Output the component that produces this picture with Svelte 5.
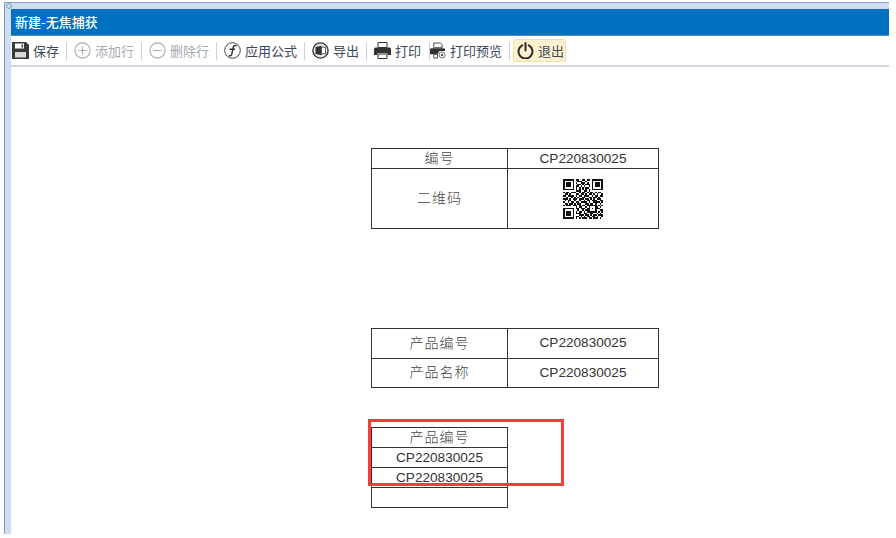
<script lang="ts">
  const code = "CP220830025";

  const qrRows = [
    "1111111011001101101111111",
    "1000001001110010001000001",
    "1011101010011101001011101",
    "1011101001101011101011101",
    "1011101011010100101011101",
    "1000001010101011001000001",
    "1111111010101010101111111",
    "0000000011100110100000000",
    "1011011100101101011010110",
    "0110100011011010110101001",
    "1101111010110111001011011",
    "0010010101001100110110100",
    "1110101110111011010101110",
    "0101100100100101101110011",
    "1001011011011110100111101",
    "0110110101100011011010010",
    "1011101110101101111110101",
    "0000000010110010100011010",
    "1111111011011101101011100",
    "1000001001001011100010011",
    "1011101010110101111110101",
    "1011101011100110011001010",
    "1011101000111011010110111",
    "1000001011010101101101001",
    "1111111010101110110111010",
  ];

  const qrPath = qrRows
    .map((row, y) =>
      row
        .split("")
        .map((c, x) => (c === "1" ? `M${x} ${y}h1v1h-1z` : ""))
        .join(""),
    )
    .join("");
</script>

<div class="window">
  <div class="frame-top"><span class="frame-dot"></span></div>
  <div class="frame-body">
    <div class="frame-left"></div>
    <div class="main">
      <div class="titlebar">新建-无焦捕获</div>

      <div class="toolbar">
        <button class="tool" type="button">
          <svg viewBox="0 0 17 17" width="17" height="17">
            <path d="M0 0h14l3 3v14H0z" fill="#3a3a3a" />
            <path d="M3 1.500h9v5H3z" fill="#fff" />
            <path d="M9.500 2.500h1.600v3H9.500z" fill="#3a3a3a" />
            <path d="M3 10h11v5.500H3z" fill="#d8d8d8" />
          </svg>
          保存
        </button>
        <span class="sep"></span>
        <button class="tool disabled" type="button">
          <svg viewBox="0 0 17 17" width="17" height="17" fill="none" stroke="#a8a8a8" stroke-width="1.100">
            <circle cx="8.500" cy="8.500" r="7.600" />
            <path d="M8.500 4.500v8M4.500 8.500h8" />
          </svg>
          添加行
        </button>
        <span class="sep"></span>
        <button class="tool disabled" type="button">
          <svg viewBox="0 0 17 17" width="17" height="17" fill="none" stroke="#a8a8a8" stroke-width="1.100">
            <circle cx="8.500" cy="8.500" r="7.600" />
            <path d="M4.500 8.500h8" />
          </svg>
          删除行
        </button>
        <span class="sep"></span>
        <button class="tool" type="button">
          <svg viewBox="0 0 17 17" width="17" height="17" fill="none" stroke="#333">
            <circle cx="8.500" cy="8.500" r="7.800" stroke-width="0.900" />
            <path d="M12.600 3.800c-1.800-.9-3 0-3.500 2L7.900 11.600c-.4 2-1.500 2.600-3 2M5.600 7.200h5.400" stroke-width="1.500" />
          </svg>
          应用公式
        </button>
        <span class="sep"></span>
        <button class="tool" type="button">
          <svg viewBox="0 0 17 17" width="17" height="17">
            <circle cx="8.500" cy="8.500" r="7.600" fill="#e8e8e8" stroke="#333" stroke-width="1.400" />
            <path d="M3.500 5l6-1.200v9.400l-6-1.200z" fill="#333" />
            <path d="M9.500 5.200h4v6.600h-4z" fill="#fff" stroke="#333" stroke-width="0.800" />
          </svg>
          导出
        </button>
        <span class="sep"></span>
        <button class="tool" type="button">
          <svg viewBox="0 0 17 17" width="17" height="17">
            <path d="M4 .5h9v5H4z" fill="#fff" stroke="#333" />
            <path d="M1.500 5.500h14a1.500 1.500 0 0 1 1.500 1.500v6h-3.500v-2h-10v2H0V7a1.500 1.500 0 0 1 1.500-1.500z" fill="#333" />
            <path d="M4 12h9v4.500H4z" fill="#fff" stroke="#333" />
          </svg>
          打印
        </button>
        <span class="sep tight"></span>
        <button class="tool" type="button">
          <svg viewBox="0 0 17 17" width="16" height="17">
            <path d="M4 .5h7l2 2v3H4z" fill="#fff" stroke="#444" />
            <path d="M1.500 6h13a1.500 1.500 0 0 1 1.500 1.500V9H10l-2 3.500H0V7.500A1.500 1.500 0 0 1 1.500 6z" fill="#333" />
            <path d="M4 12.500h4v4H4z" fill="#fff" stroke="#444" />
            <circle cx="12.800" cy="13.200" r="3.200" fill="#fff" stroke="#666" />
            <circle cx="12.800" cy="13.200" r="1.300" fill="#555" />
          </svg>
          打印预览
        </button>
        <span class="sep before-active"></span>
        <button class="tool active" type="button">
          <svg viewBox="0 0 17 17" width="17" height="17" fill="none" stroke="#2b2b2b" stroke-width="2" stroke-linecap="round">
            <path d="M5.200 3.300a7 7 0 1 0 6.600 0" />
            <path d="M8.500 1v7.500" />
          </svg>
          退出
        </button>
      </div>

      <div class="sheet">
        <table class="wide first">
          <colgroup><col class="col-a" /><col /></colgroup>
          <tbody>
            <tr class="row-20">
              <td class="label">编号</td>
              <td class="code">{code}</td>
            </tr>
            <tr class="row-60">
              <td class="label">二维码</td>
              <td class="qr-cell">
                <svg class="qr" viewBox="0 0 25 25" width="40" height="40" shape-rendering="crispEdges">
                  <path d={qrPath} fill="#111" />
                </svg>
              </td>
            </tr>
          </tbody>
        </table>

        <table class="wide second">
          <colgroup><col class="col-a" /><col /></colgroup>
          <tbody>
            <tr class="row-29">
              <td class="label">产品编号</td>
              <td class="code">{code}</td>
            </tr>
            <tr class="row-29">
              <td class="label">产品名称</td>
              <td class="code">{code}</td>
            </tr>
          </tbody>
        </table>

        <table class="narrow-table">
          <tbody>
            <tr class="row-20"><td class="label">产品编号</td></tr>
            <tr class="row-20"><td class="code">{code}</td></tr>
            <tr class="row-20"><td class="code">{code}</td></tr>
            <tr class="row-20"><td></td></tr>
          </tbody>
        </table>

        <div class="highlight"></div>
      </div>
    </div>
  </div>
</div>

<style>
  :global(body) {
    margin: 0;
    background: #fff;
  }

  .window {
    box-sizing: border-box;
    width: 885px;
    height: 532px;
    margin: 2px 0 0 4px;
    border-left: 1px solid #7f9bcc;
    border-top: 1px solid #8ba3cf;
    display: flex;
    flex-direction: column;
    font-family: "Noto Sans CJK SC", sans-serif;
  }

  .frame-top {
    flex: none;
    height: 6px;
    background: #d0ddef;
    position: relative;
  }

  .frame-dot {
    position: absolute;
    left: 1px;
    top: 0;
    width: 4px;
    height: 4px;
    border: 1px solid #8a9ab5;
    border-radius: 50%;
  }

  .frame-body {
    flex: 1;
    display: flex;
    min-height: 0;
  }

  .frame-left {
    flex: none;
    width: 6px;
    background: #d0ddef;
  }

  .main {
    flex: 1;
    min-width: 0;
    display: flex;
    flex-direction: column;
    background: #fff;
  }

  .titlebar {
    flex: none;
    box-sizing: border-box;
    height: 27px;
    padding: 0 0 1px 4px;
    background: #0070c0;
    border-bottom: 1px solid #5f8aa8;
    color: #fff;
    font-size: 13px;
    font-weight: 500;
    line-height: 26px;
  }

  .toolbar {
    flex: none;
    box-sizing: border-box;
    height: 31px;
    padding: 0 0 0 1px;
    display: flex;
    align-items: center;
    border-bottom: 2px solid #d6d6e0;
  }

  .tool {
    display: flex;
    align-items: center;
    gap: 4px;
    padding: 0;
    border: none;
    background: none;
    color: #3c4a5c;
    font: inherit;
    font-size: 13px;
    line-height: 21px;
    white-space: nowrap;
  }

  .tool svg {
    flex: none;
  }

  .tool.disabled {
    color: #a6aab0;
  }

  .tool.active {
    padding: 0 1px 0 3px;
    background: #fdf1cf;
    border: 1px solid #f3dfa6;
    border-radius: 3px;
  }

  .sep {
    flex: none;
    width: 1px;
    height: 18px;
    margin: 0 7px;
    background: #c9d3df;
  }

  .sep.tight {
    margin-right: 0;
    margin-left: 8px;
  }

  .sep.before-active {
    margin-right: 3px;
  }

  .sheet {
    flex: 1;
    position: relative;
    padding: 81px 0 0 360px;
    background: #fff;
  }

  table {
    border-collapse: collapse;
    table-layout: fixed;
    color: #333;
  }

  td {
    box-sizing: border-box;
    padding: 0;
    border: 1px solid #333;
    text-align: center;
    vertical-align: middle;
  }

  .wide {
    width: 288px;
  }

  .first {
    margin-bottom: 99px;
  }

  .second {
    margin-bottom: 39px;
  }

  .narrow-table {
    width: 137px;
  }

  .col-a {
    width: 136px;
  }

  .row-20 {
    height: 20px;
  }

  .row-29 {
    height: 29.500px;
  }

  .row-60 {
    height: 60px;
  }

  .label {
    padding-bottom: 3px;
    font-size: 14px;
    font-weight: 300;
    letter-spacing: 1px;
    line-height: 16px;
    color: #444;
  }

  .code {
    font-family: "Liberation Sans", sans-serif;
    font-size: 13.600px;
    line-height: 18px;
  }

  .qr-cell {
    line-height: 0;
  }

  .qr {
    display: inline-block;
  }

  .highlight {
    position: absolute;
    left: 357px;
    top: 352px;
    box-sizing: border-box;
    width: 196px;
    height: 67px;
    border: 3px solid #f93c3c;
    pointer-events: none;
  }
</style>
